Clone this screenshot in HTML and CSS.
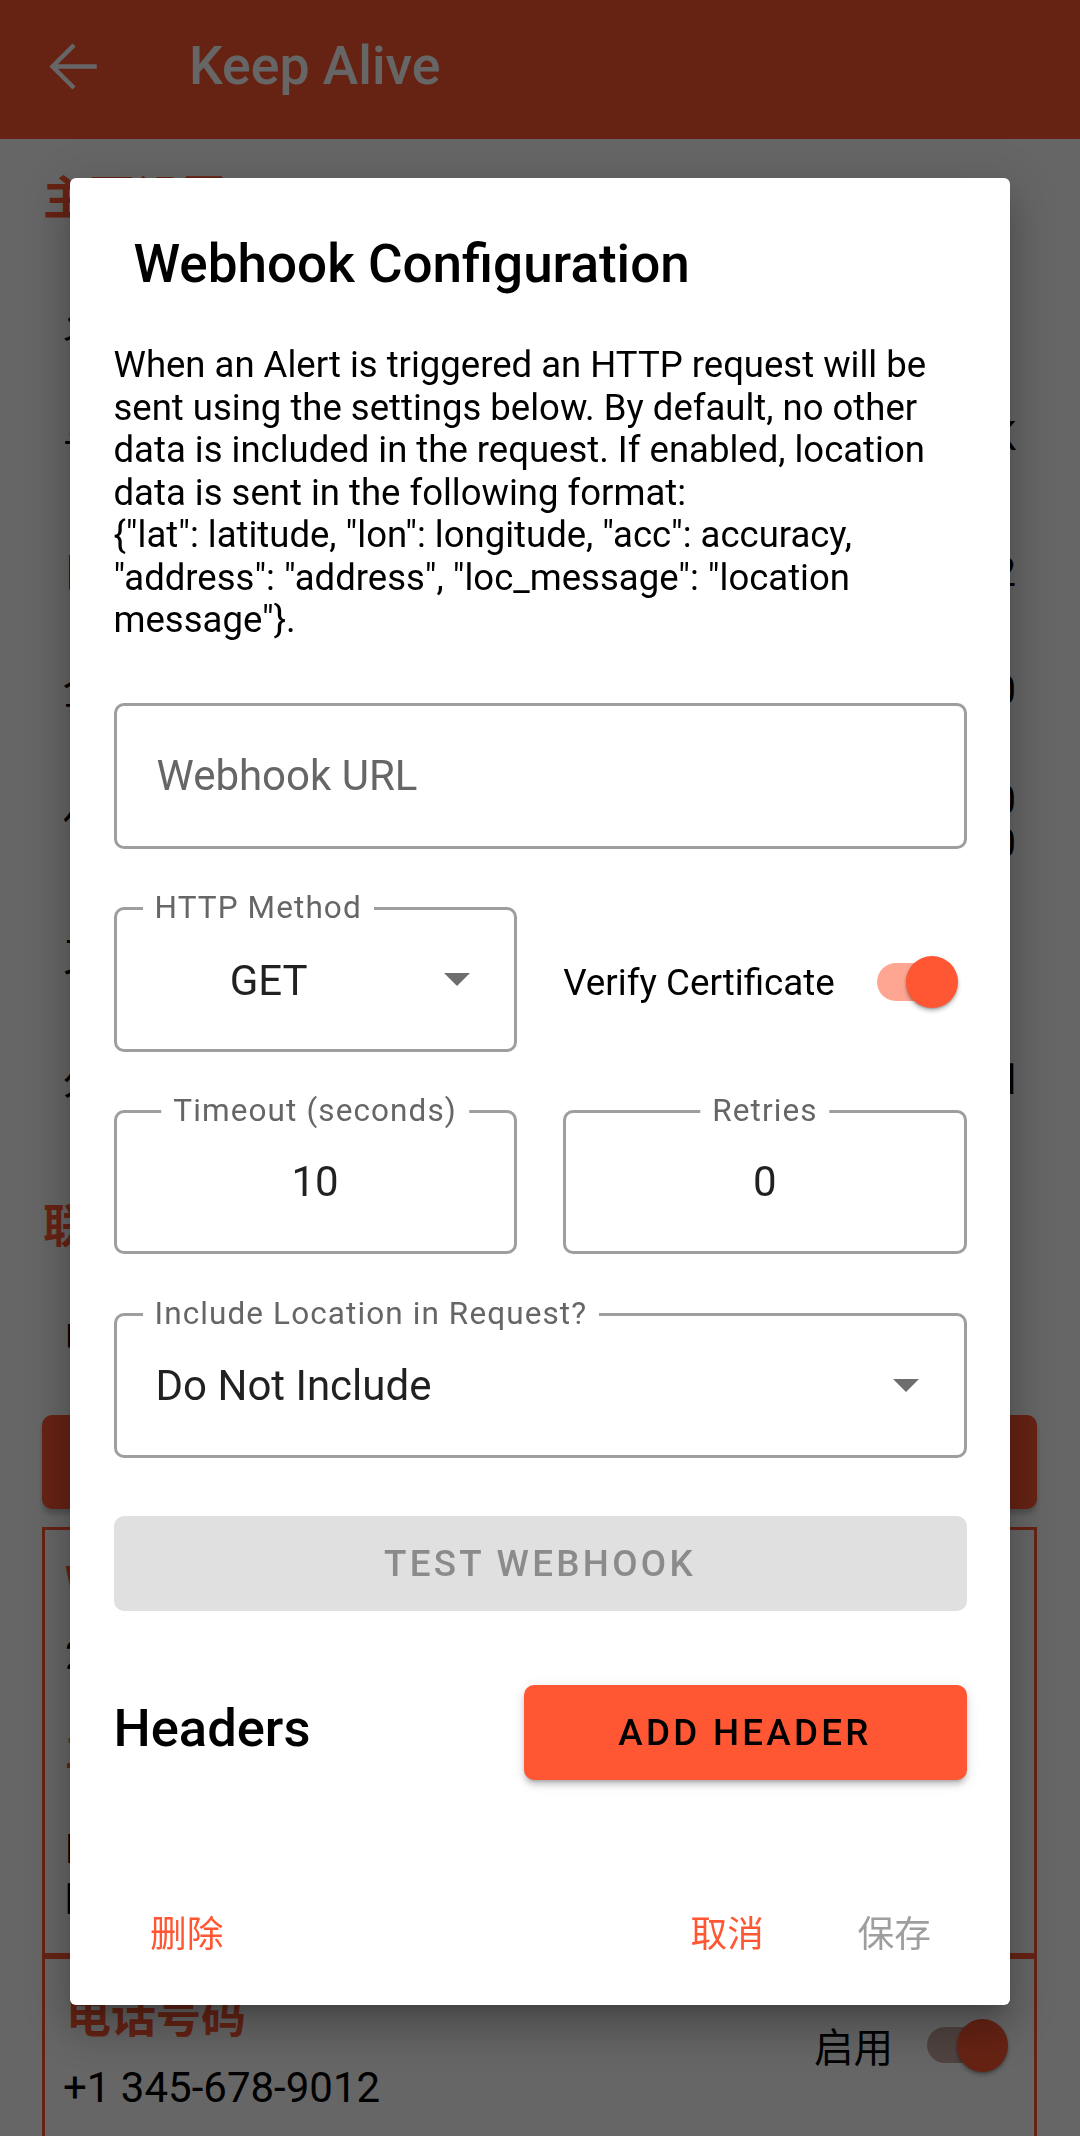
FILE: index.html
```html
<!DOCTYPE html>
<html lang="en">
<head>
<meta charset="utf-8">
<title>Keep Alive</title>
<link rel="stylesheet" href="styles.css">
</head>
<body>
<div class="app">
  <header class="appbar">
    <svg class="nav-icon" viewBox="0 0 24 24" aria-hidden="true"><path d="M20 12H4.6M11.6 4.4L4 12l7.6 7.6" fill="none" stroke="#fff" stroke-width="1.7" stroke-linecap="square"/></svg>
    <h1 class="appbar-title">Keep Alive</h1>
  </header>
  <main class="page">
    <h2 class="section-title">主要设置</h2>
    <div class="row r-a"><span class="label">允许后台运行</span><span class="value"></span></div>
    <div class="row r-b"><span class="label">与服务器同步</span><span class="value">1K</span></div>
    <div class="row r-c"><span class="label">目标应用</span><span class="value">2</span></div>
    <div class="row r-d"><span class="label">全部检查间隔</span><span class="value">60</span></div>
    <div class="row r-e"><span class="label">休眠时间</span><span class="value two">10<br>20</span></div>
    <div class="row r-f"><span class="label">又一次提醒</span><span class="value"></span></div>
    <div class="row r-g"><span class="label">久未使用</span><span class="value">Disabled</span></div>
    <h2 class="section-title s2">联系人</h2>
    <div class="row r-h"><span class="label">电子邮件通知</span><span class="value"></span></div>
    <button class="page-btn">添加联系人</button>
    <section class="card card-one">
      <div class="c-title">Webhook</div>
      <div class="c-line c-2">2 个请求头</div>
      <div class="c-title c-3">主要设置</div>
      <div class="c-line c-4">Do Not Include</div>
      <div class="c-line c-5">by default</div>
    </section>
    <section class="card card-two">
      <div class="c2-main">
        <div class="c2-title">电话号码</div>
        <div class="c2-phone">+1 345-678-9012</div>
      </div>
      <div class="c2-toggle">
        <span class="c2-label">启用</span>
        <span class="switch switch-bg"><span class="track"></span><span class="thumb"></span></span>
      </div>
    </section>
  </main>
</div>

<div class="scrim"></div>

<div class="dialog" role="dialog" aria-labelledby="dlg-title">
  <h2 class="dlg-title" id="dlg-title">Webhook Configuration</h2>
  <p class="dlg-text">When an Alert is triggered an HTTP request will be sent using the settings below. By default, no other data is included in the request. If enabled, location data is sent in the following format:<br>{"lat": latitude, "lon": longitude, "acc": accuracy, "address": "address", "loc_message": "location message"}.</p>

  <div class="field field-url"><span class="placeholder">Webhook URL</span></div>

  <div class="pair pair-method">
    <div class="field select">
      <span class="flabel">HTTP Method</span>
      <span class="fvalue method">GET</span>
      <svg class="drop" viewBox="0 0 10 5" aria-hidden="true"><path d="M0 0l5 5 5-5z"/></svg>
    </div>
    <div class="verify">
      <span class="verify-label">Verify Certificate</span>
      <span class="switch"><span class="track"></span><span class="thumb"></span></span>
    </div>
  </div>

  <div class="pair pair-num">
    <div class="field num">
      <span class="flabel centered">Timeout (seconds)</span>
      <span class="fvalue">10</span>
    </div>
    <div class="field num">
      <span class="flabel centered">Retries</span>
      <span class="fvalue">0</span>
    </div>
  </div>

  <div class="field select location">
    <span class="flabel">Include Location in Request?</span>
    <span class="fvalue loc">Do Not Include</span>
    <svg class="drop" viewBox="0 0 10 5" aria-hidden="true"><path d="M0 0l5 5 5-5z"/></svg>
  </div>

  <button class="btn-test" disabled>TEST WEBHOOK</button>

  <div class="headers-row">
    <h3 class="headers-title">Headers</h3>
    <button class="btn-add">ADD HEADER</button>
  </div>

  <div class="actions">
    <button class="act act-delete">删除</button>
    <span class="spacer"></span>
    <button class="act act-cancel">取消</button>
    <button class="act act-save" disabled>保存</button>
  </div>
</div>
</body>
</html>
```

FILE: styles.css
```css
html, body {
  margin: 0;
  padding: 0;
}
body {
  width: 1080px;
  height: 2136px;
  overflow: hidden;
  position: relative;
  background: #fff;
  font-family: Roboto, "Noto Sans CJK SC", sans-serif;
}

/* ---------- background page ---------- */
.appbar {
  height: 139px;
  box-sizing: border-box;
  padding-bottom: 7px;
  background: #ff5733;
  display: flex;
  align-items: center;
}
.nav-icon {
  width: 63px;
  height: 63px;
  margin-left: 42px;
}
.appbar-title {
  margin: 0 0 0 84px;
  font: 500 53.5px/62px Roboto, sans-serif;
  color: #fff;
}

.section-title {
  margin: 29px 0 0 43px;
  font: 700 46px/52px "Noto Sans CJK SC", sans-serif;
  color: #ff5733;
}
.section-title.s2 { margin-top: 76px; }

.row {
  height: 80px;
  box-sizing: border-box;
  padding: 0 64px 0 63px;
  display: flex;
  justify-content: space-between;
  align-items: center;
  font: 400 40px/43px Roboto, "Noto Sans CJK SC", sans-serif;
  color: #000;
}
.value { text-align: right; }
.r-a { margin-top: 63px; }
.r-b { margin-top: 33px; }
.r-c { margin-top: 56px; }
.r-d { margin-top: 38px; }
.r-e { margin-top: 52px; }
.r-f { margin-top: 55px; }
.r-g { margin-top: 43px; }
.r-h { margin-top: 50px; }

.page-btn {
  display: block;
  box-sizing: border-box;
  margin: 37px 43px 0 42px;
  width: 995px;
  height: 94px;
  border: 0;
  border-radius: 10px;
  background: #ff5733;
  color: #fff;
  font: 500 36.75px Roboto, "Noto Sans CJK SC", sans-serif;
  box-shadow: 0 5px 5px rgba(0,0,0,.2);
}

.card {
  box-sizing: border-box;
  margin: 0 43px 0 42px;
  border: 3px solid #ff5733;
}
.card-one {
  margin-top: 18px;
  height: 429px;
  padding: 30px 20px 0 20px;
  font: 400 40px/44px Roboto, "Noto Sans CJK SC", sans-serif;
  color: #000;
}
.c-title { color: #ff5733; font-weight: 700; }
.c-2 { margin-top: 30px; }
.c-3 { margin-top: 52px; }
.c-4 { margin-top: 50px; line-height: 51px; }
.c-5 { line-height: 51px; }

.card-two {
  height: 300px;
  padding: 29px 26px 0 18px;
  display: flex;
  justify-content: space-between;
  align-items: flex-start;
}
.c2-title {
  font: 700 45px/52px "Noto Sans CJK SC", sans-serif;
  color: #ff5733;
  margin-left: 3px;
}
.c2-phone {
  margin-top: 23px;
  font: 400 42px/50px Roboto, sans-serif;
  color: #000;
}
.c2-toggle {
  margin-top: 31px;
  display: flex;
  align-items: center;
}
.c2-label {
  font: 400 39.5px/52px "Noto Sans CJK SC", sans-serif;
  color: #000;
  margin-right: 34px;
}

/* switch */
.switch {
  position: relative;
  display: inline-block;
  width: 81px;
  height: 52px;
  flex: none;
}
.switch .track {
  position: absolute;
  left: 0;
  top: 7px;
  width: 70px;
  height: 38px;
  border-radius: 19px;
  background: #ffa692;
}
.switch .thumb {
  position: absolute;
  right: 0;
  top: 0;
  width: 52px;
  height: 52px;
  border-radius: 50%;
  background: #ff5733;
  box-shadow: 0 3px 4px rgba(0,0,0,.25), 0 1px 2px rgba(0,0,0,.2);
}
.switch-bg .track { background: #c9a7a0; width: 66px; top: 8px; height: 36px; }
.switch-bg .thumb { width: 51px; height: 53px; }

/* ---------- scrim ---------- */
.scrim {
  position: fixed;
  inset: 0;
  background: rgba(0,0,0,.6);
}

/* ---------- dialog ---------- */
.dialog {
  position: absolute;
  left: 70px;
  top: 178px;
  width: 940px;
  box-sizing: border-box;
  padding: 55px 43.5px 24.5px;
  background: #fff;
  border-radius: 6px;
  box-shadow: 0 28px 38px 4px rgba(0,0,0,.14), 0 10px 46px 8px rgba(0,0,0,.12), 0 12px 16px -8px rgba(0,0,0,.2);
}
.dlg-title {
  margin: 0 0 0 20px;
  font: 500 53px/62px Roboto, sans-serif;
  color: #000;
}
.dlg-text {
  margin: 49px 0 0;
  font: 400 36.5px/42.5px Roboto, sans-serif;
  color: #000;
}

.field {
  position: relative;
  box-sizing: border-box;
  height: 146px;
  border: 3px solid #9e9e9e;
  border-radius: 10px;
  display: flex;
  align-items: center;
}
.field-url {
  margin-top: 61.5px;
  padding-left: 40px;
}
.placeholder {
  font: 400 42px/50px Roboto, sans-serif;
  color: #666;
}
.flabel {
  position: absolute;
  left: 26px;
  top: -18px;
  padding: 0 12px;
  background: #fff;
  font: 400 31.5px/31.5px Roboto, sans-serif;
  letter-spacing: 0.035em;
  color: #666;
  white-space: nowrap;
}
.flabel.centered {
  left: 50%;
  transform: translateX(-50%);
}
.fvalue {
  font: 400 42px/50px Roboto, sans-serif;
  color: rgba(0,0,0,.87);
}

.pair {
  display: grid;
  grid-template-columns: 1fr 1fr;
  column-gap: 46.5px;
  margin-top: 58px;
}
.pair-method .field { height: 145px; }
.pair-num .field { height: 144px; }

.select {
  padding: 0 44px 0 39px;
}
.method {
  flex: 1;
  text-align: center;
  margin-right: 62px;
  margin-top: 3px;
}
.drop {
  width: 26px;
  height: 13px;
  fill: #6e6e6e;
  flex: none;
}
.location {
  margin-top: 59px;
  height: 145px;
  padding-right: 45px;
}
.loc { flex: 1; }

.verify {
  display: flex;
  align-items: center;
  justify-content: space-between;
  padding-right: 8.5px;
}
.verify-label {
  font: 400 36.75px/43px Roboto, sans-serif;
  color: #000;
  margin-top: 5px;
}
.verify .switch { margin-top: 5px; }

.num {
  justify-content: center;
}

.btn-test {
  display: block;
  width: 100%;
  height: 95px;
  margin-top: 58px;
  border: 0;
  border-radius: 10px;
  background: #e0e0e0;
  color: #8b8b8b;
  font: 500 36.75px Roboto, sans-serif;
  letter-spacing: 0.09em;
  padding: 0;
}

.headers-row {
  margin-top: 73.5px;
  display: flex;
  justify-content: space-between;
  align-items: center;
}
.headers-title {
  margin: 0 0 9px;
  font: 500 52.5px/62px Roboto, sans-serif;
  color: #000;
}
.btn-add {
  width: 443px;
  height: 95.5px;
  border: 0;
  border-radius: 10px;
  background: #ff5733;
  color: #000;
  font: 500 36.75px Roboto, sans-serif;
  letter-spacing: 0.089em;
  padding: 0;
  box-shadow: 0 5px 3px -4px rgba(0,0,0,.2), 0 5px 5px rgba(0,0,0,.14), 0 3px 13px rgba(0,0,0,.12);
}

.actions {
  margin-top: 106.5px;
  height: 94px;
  display: flex;
  align-items: center;
}
.spacer { flex: 1; }
.act {
  border: 0;
  background: none;
  padding: 0;
  margin-top: 3px;
  font: 400 36.75px/44px Roboto, "Noto Sans CJK SC", sans-serif;
}
.act-delete { margin-left: 36.5px; color: #ff5733; }
.act-cancel { color: #ff5733; }
.act-save { margin-left: 93.5px; margin-right: 35.5px; color: #9e9e9e; }
```
